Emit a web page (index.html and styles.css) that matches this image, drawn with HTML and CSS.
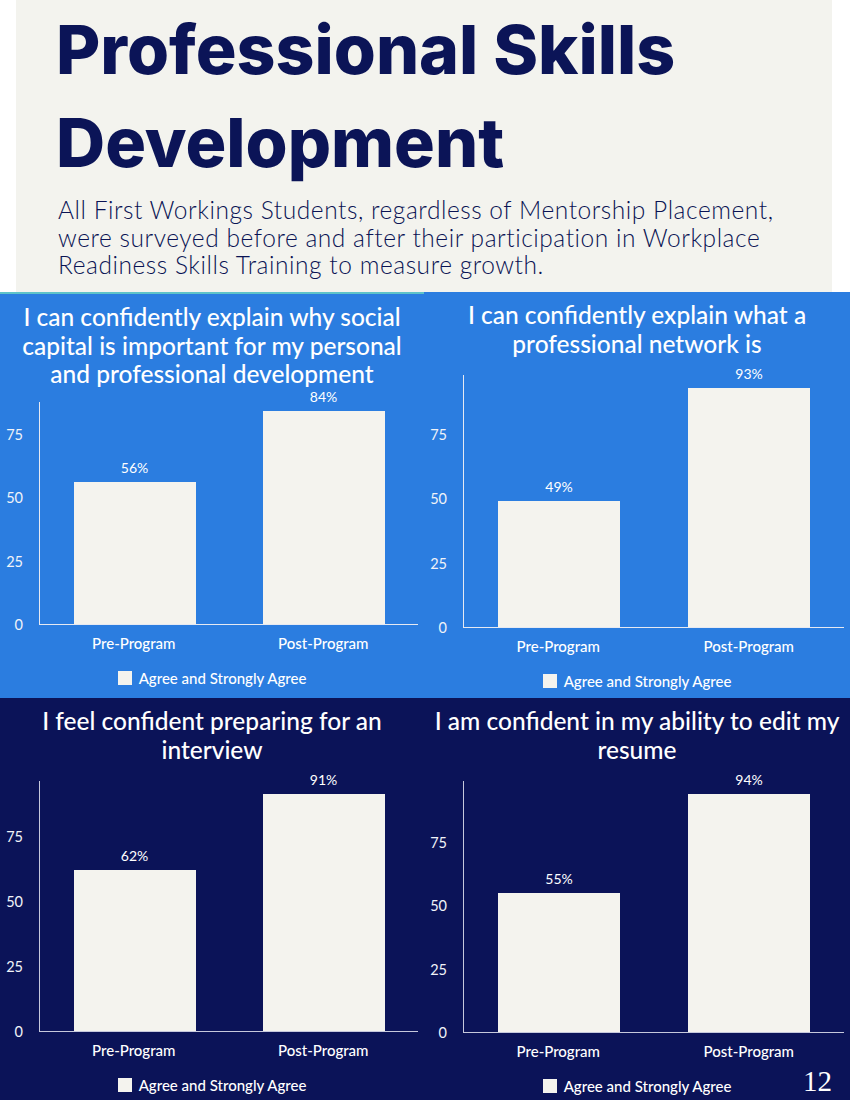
FILE: index.html
```html
<!DOCTYPE html>
<html lang="en">
<head>
<meta charset="utf-8">
<title>Professional Skills Development</title>
<link rel="stylesheet" href="styles.css">
</head>
<body>
<div class="page">
  <header class="header">
    <h1 class="title">Professional Skills Development</h1>
    <p class="subtitle">All First Workings Students, regardless of Mentorship Placement, were surveyed before and after their participation in Workplace Readiness Skills Training to measure growth.</p>
  </header>

  <main class="charts">
    <section class="panel panel-blue panel-tl">
      <h2 class="ctitle">I can confidently explain why social capital is important for my personal and professional development</h2>
      <div class="plotwrap plot-tl">
        <div class="yaxis">
          <span class="tick" style="bottom:-9px">0</span>
          <span class="tick" style="bottom:54px">25</span>
          <span class="tick" style="bottom:118px">50</span>
          <span class="tick" style="bottom:181px">75</span>
        </div>
        <div class="plot">
          <div class="col"><span class="val">56%</span><div class="bar" style="height:142px"></div></div>
          <div class="col"><span class="val">84%</span><div class="bar" style="height:213px"></div></div>
        </div>
      </div>
      <div class="cats"><span>Pre-Program</span><span>Post-Program</span></div>
      <div class="legend"><span class="swatch"></span>Agree and Strongly Agree</div>
    </section>

    <section class="panel panel-blue panel-tr">
      <h2 class="ctitle">I can confidently explain what a professional network is</h2>
      <div class="plotwrap plot-tr">
        <div class="yaxis">
          <span class="tick" style="bottom:-9px">0</span>
          <span class="tick" style="bottom:55px">25</span>
          <span class="tick" style="bottom:120px">50</span>
          <span class="tick" style="bottom:184px">75</span>
        </div>
        <div class="plot">
          <div class="col"><span class="val">49%</span><div class="bar" style="height:126px"></div></div>
          <div class="col"><span class="val">93%</span><div class="bar" style="height:239px"></div></div>
        </div>
      </div>
      <div class="cats"><span>Pre-Program</span><span>Post-Program</span></div>
      <div class="legend"><span class="swatch"></span>Agree and Strongly Agree</div>
    </section>

    <section class="panel panel-navy panel-bl">
      <h2 class="ctitle">I feel confident preparing for an interview</h2>
      <div class="plotwrap plot-bl">
        <div class="yaxis">
          <span class="tick" style="bottom:-9px">0</span>
          <span class="tick" style="bottom:56px">25</span>
          <span class="tick" style="bottom:121px">50</span>
          <span class="tick" style="bottom:186px">75</span>
        </div>
        <div class="plot">
          <div class="col"><span class="val">62%</span><div class="bar" style="height:161px"></div></div>
          <div class="col"><span class="val">91%</span><div class="bar" style="height:237px"></div></div>
        </div>
      </div>
      <div class="cats"><span>Pre-Program</span><span>Post-Program</span></div>
      <div class="legend"><span class="swatch"></span>Agree and Strongly Agree</div>
    </section>

    <section class="panel panel-navy panel-br">
      <h2 class="ctitle">I am confident in my ability to edit my resume</h2>
      <div class="plotwrap plot-br">
        <div class="yaxis">
          <span class="tick" style="bottom:-9px">0</span>
          <span class="tick" style="bottom:54px">25</span>
          <span class="tick" style="bottom:118px">50</span>
          <span class="tick" style="bottom:181px">75</span>
        </div>
        <div class="plot">
          <div class="col"><span class="val">55%</span><div class="bar" style="height:139px"></div></div>
          <div class="col"><span class="val">94%</span><div class="bar" style="height:238px"></div></div>
        </div>
      </div>
      <div class="cats"><span>Pre-Program</span><span>Post-Program</span></div>
      <div class="legend"><span class="swatch"></span>Agree and Strongly Agree</div>
      <span class="pagenum">12</span>
    </section>
  </main>
</div>
</body>
</html>
```

FILE: styles.css
```css
* { box-sizing: border-box; }

html, body {
  margin: 0;
  padding: 0;
  background: #ffffff;
}

.page {
  width: 850px;
  height: 1100px;
  overflow: hidden;
  font-family: "Lato", "Liberation Sans", sans-serif;
}

.header {
  margin-left: 16px;
  width: 816px;
  height: 292px;
  background: #f3f3ee;
  padding: 3px 0 0 40px;
  color: #0b1457;
}

.title {
  margin: 0;
  font-family: "Inter", "Liberation Sans", sans-serif;
  font-weight: 800;
  font-size: 68px;
  line-height: 93px;
  letter-spacing: 0;
}

.subtitle {
  margin: 7px 0 0 2px;
  font-family: "Lato", "Liberation Sans", sans-serif;
  font-weight: 300;
  font-size: 24.5px;
  line-height: 27.5px;
  letter-spacing: 0.55px;
  width: 740px;
  color: #0a1354;
}

.charts {
  display: grid;
  grid-template-columns: 424px 426px;
  grid-template-rows: 406px 402px;
}

.panel {
  position: relative;
  color: #ffffff;
  padding-top: 9px;
}

.panel-blue { background: #2b7de0; }
.panel-navy { background: #0b1358; }

.panel-tl {
  border-top: 2px solid #5ec3c9;
}

.ctitle {
  margin: 0;
  font-weight: 500;
  font-size: 24.5px;
  line-height: 28.5px;
  text-align: center;
  padding: 0 4px;
}

.plotwrap {
  display: flex;
  margin-top: 17px;
}

.plot-tl { height: 223px; margin-top: 13px; }
.plot-tr { height: 253px; }
.plot-bl { height: 251px; }
.plot-br { height: 252px; }

.yaxis {
  position: relative;
  width: 39px;
  flex: none;
}

.tick {
  position: absolute;
  right: 16px;
  font-size: 14.5px;
  line-height: 18px;
  color: #f1f3f8;
}

.plot {
  flex: 1;
  margin-right: 6px;
  display: flex;
  align-items: flex-end;
  border-left: 1px solid #e6e9f2;
  border-bottom: 1px solid #e6e9f2;
}

.panel-navy .plot {
  border-color: #c6c8dc;
}

.col {
  flex: 1;
  display: flex;
  flex-direction: column;
  align-items: center;
  justify-content: flex-end;
}

.val {
  font-size: 14px;
  line-height: 18px;
  margin-bottom: 5px;
}

.bar {
  width: 122px;
  background: #f4f3ee;
}

.cats {
  display: flex;
  margin: 8px 6px 0 39px;
  font-size: 15px;
  font-weight: 500;
  line-height: 20px;
}

.cats span {
  flex: 1;
  text-align: center;
}

.legend {
  display: flex;
  align-items: center;
  justify-content: center;
  gap: 7px;
  margin: 16px 0 0 0;
  font-size: 15px;
  font-weight: 500;
  line-height: 18px;
}

.swatch {
  width: 14px;
  height: 14px;
  background: #f4f3ee;
}

.pagenum {
  position: absolute;
  right: 18px;
  bottom: 4px;
  font-family: "Liberation Serif", "DejaVu Serif", serif;
  font-size: 29px;
  line-height: 29px;
  color: #ffffff;
}
```
